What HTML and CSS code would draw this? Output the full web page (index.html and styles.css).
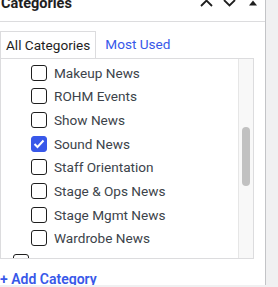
FILE: index.html
```html
<!DOCTYPE html>
<html lang="en">
<head>
    <meta charset="UTF-8">
    <meta name="viewport" content="width=device-width, initial-scale=1.0">
    <title>Categories</title>
    <link rel="stylesheet" href="styles.css">
</head>
<body>
    <div class="postbox">
        <div class="postbox-header">
            <h2>Categories</h2>
            <div class="handle-actions">
                <button class="handle-btn" aria-label="Move up">
                    <svg width="13" height="8" viewBox="0 0 13 8"><path d="M1 7 L6.5 1.5 L12 7" fill="none" stroke="#1e1e1e" stroke-width="1.8"/></svg>
                </button>
                <button class="handle-btn" aria-label="Move down">
                    <svg width="13" height="8" viewBox="0 0 13 8"><path d="M1 1 L6.5 6.5 L12 1" fill="none" stroke="#1e1e1e" stroke-width="1.8"/></svg>
                </button>
                <button class="handle-btn" aria-label="Toggle panel">
                    <svg width="8" height="6" viewBox="0 0 8 6"><polygon points="0,5.5 4,0.5 8,5.5" fill="#1e1e1e"/></svg>
                </button>
            </div>
        </div>

        <div class="inside">
            <ul class="category-tabs">
                <li class="tab active">All Categories</li>
                <li class="tab"><a href="#">Most Used</a></li>
            </ul>

            <div class="tabs-panel">
                <div class="checklist-wrap">
                    <ul class="checklist">
                        <li>
                            <ul class="children">
                                <li><label><span class="box"></span>Makeup News</label></li>
                                <li><label><span class="box"></span>ROHM Events</label></li>
                                <li><label><span class="box"></span>Show News</label></li>
                                <li><label><span class="box checked"><svg width="12" height="10" viewBox="0 0 12 10"><path d="M1.5 5 L4.5 8 L10.5 1.5" fill="none" stroke="#fff" stroke-width="2"/></svg></span>Sound News</label></li>
                                <li><label><span class="box"></span>Staff Orientation</label></li>
                                <li><label><span class="box"></span>Stage &amp; Ops News</label></li>
                                <li><label><span class="box"></span>Stage Mgmt News</label></li>
                                <li><label><span class="box"></span>Wardrobe News</label></li>
                            </ul>
                        </li>
                        <li><label><span class="box"></span>Training</label></li>
                    </ul>
                </div>
                <div class="scroll-track">
                    <div class="scroll-thumb"></div>
                </div>
            </div>

            <a href="#" class="add-category">+ Add Category</a>
        </div>
    </div>
</body>
</html>
```

FILE: styles.css
```css
:root {
    --blue: #3858e9;
    --text: #1e1e1e;
    --label: #3c434a;
    --border: #dcdcde;
}

* {
    margin: 0;
    padding: 0;
    box-sizing: border-box;
    font-family: 'Roboto', sans-serif;
}

body {
    background-color: #f0f0f1;
    color: var(--text);
    font-size: 13.6px;
    overflow: hidden;
}

.postbox {
    width: 266px;
    height: 300px;
    margin-top: -15px;
    background-color: white;
    border-right: 1px solid #c3c4c7;
}

.postbox-header {
    display: flex;
    justify-content: space-between;
    align-items: center;
    height: 37px;
    border-bottom: 1px solid var(--border);
}

.postbox-header h2 {
    font-size: 14.5px;
    font-weight: 700;
    padding-left: 1px;
}

.handle-actions {
    display: flex;
}

.handle-btn {
    width: 23.5px;
    height: 36px;
    display: flex;
    align-items: center;
    justify-content: center;
    background: none;
    border: none;
}

.inside {
    padding-top: 9px;
}

.category-tabs {
    list-style: none;
    display: flex;
    align-items: center;
}

.tab {
    height: 27px;
    line-height: 27px;
    padding: 0 5px;
    white-space: nowrap;
}

.tab.active {
    border: 1px solid var(--border);
    border-bottom: none;
}

.tab a {
    color: var(--blue);
    text-decoration: none;
    padding-left: 4px;
}

.tabs-panel {
    display: flex;
    width: 254px;
    height: 201px;
    border: 1px solid var(--border);
}

.checklist-wrap {
    flex: 1;
    overflow: hidden;
    padding-top: 2px;
}

.checklist, .children {
    list-style: none;
}

.checklist {
    padding-left: 12px;
}

.children {
    margin-left: 18px;
}

.checklist li {
    height: 23.66px;
}

.checklist li:first-child {
    height: auto;
}

.checklist label {
    display: flex;
    align-items: center;
    height: 23.66px;
    gap: 7px;
    color: var(--label);
    white-space: nowrap;
}

.box {
    width: 16px;
    height: 16px;
    flex-shrink: 0;
    border: 1px solid var(--text);
    border-radius: 3px;
    display: flex;
    align-items: center;
    justify-content: center;
}

.box.checked {
    background-color: var(--blue);
    border-color: var(--blue);
}

.scroll-track {
    width: 15px;
    background-color: #f8f8f8;
    border-left: 1px solid #e6e6e6;
    padding-left: 3px;
}

.scroll-thumb {
    width: 8px;
    height: 59px;
    margin-top: 68px;
    background-color: #c1c1c1;
    border-radius: 4px;
}

.add-category {
    display: block;
    margin-top: 10px;
    line-height: 20px;
    font-size: 14px;
    color: var(--blue);
    font-weight: 600;
    text-decoration: underline;
}
```
